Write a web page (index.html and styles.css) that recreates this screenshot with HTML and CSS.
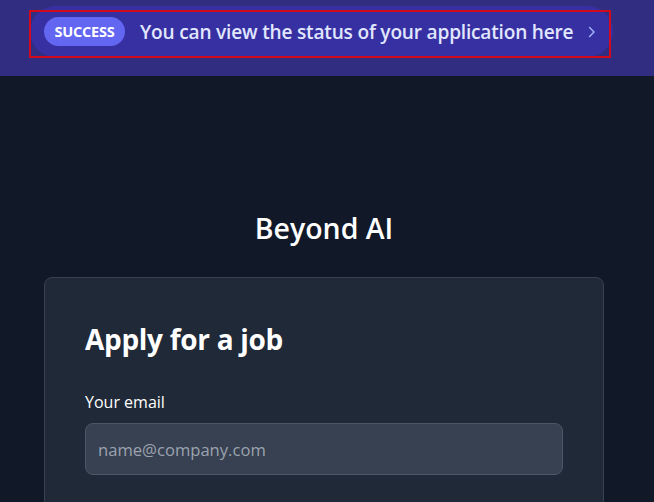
FILE: index.html
```html
<!DOCTYPE html>
<html lang="en">
<head>
<meta charset="utf-8">
<title>Beyond AI</title>
<link rel="stylesheet" href="styles.css">
</head>
<body>
<header class="topbar">
  <a class="notice" href="#">
    <span class="badge">SUCCESS</span>
    <span class="notice-text">You can view the status of your application here</span>
    <svg class="chev" viewBox="0 0 10 14" width="8" height="12" aria-hidden="true"><path d="M2 1.5 L7.5 7 L2 12.5" fill="none" stroke="currentColor" stroke-width="1.8" stroke-linecap="round" stroke-linejoin="round"/></svg>
  </a>
</header>
<main class="main">
  <h1 class="brand">Beyond AI</h1>
  <section class="card">
    <h2 class="card-title">Apply for a job</h2>
    <label class="label" for="email">Your email</label>
    <input class="input" id="email" type="email" placeholder="name@company.com">
  </section>
</main>
</body>
</html>
```
FILE: styles.css
```css
* { box-sizing: border-box; }
html, body { margin: 0; padding: 0; }
body {
  background: #111827;
  font-family: "Open Sans", "Noto Sans", sans-serif;
  color: #fff;
  height: 502px;
  overflow: hidden;
}
.topbar {
  background: #312e81;
  height: 76px;
  padding: 6px 0 0 30px;
}
.notice {
  position: relative;
  display: flex;
  align-items: center;
  width: 583px;
  height: 51px;
  padding: 0 14px;
  background: #3730a3;
  border-radius: 26px;
  text-decoration: none;
  color: #e0e7ff;
}
.notice::after {
  content: "";
  position: absolute;
  left: -1px;
  top: 4px;
  width: 578px;
  height: 44px;
  border: 2px solid #d10a1e;
}
.badge {
  display: inline-flex;
  align-items: center;
  justify-content: center;
  width: 81px;
  height: 29px;
  border-radius: 15px;
  background: #6366f1;
  color: #fff;
  font-size: 14.5px;
  font-weight: 700;
  letter-spacing: -0.2px;
}
.notice-text {
  margin-left: 15px;
  font-size: 19.1px;
  font-weight: 600;
  letter-spacing: -0.2px;
}
.chev {
  margin-left: 15px;
  color: #a5b4fc;
}
.main {
  padding-top: 134px;
  width: 560px;
  margin-left: 44px;
}
.brand {
  margin: 0 0 31px;
  text-align: center;
  font-size: 28.5px;
  font-weight: 600;
  line-height: 36px;
}
.card {
  background: #1f2937;
  border: 1px solid #374151;
  border-radius: 8px;
  padding: 43px 40px 60px;
}
.card-title {
  margin: 0 0 34px;
  font-size: 28px;
  font-weight: 700;
  line-height: 36px;
  letter-spacing: -0.3px;
}
.label {
  display: block;
  font-size: 16px;
  line-height: 22px;
  margin-bottom: 10px;
}
.input {
  display: block;
  width: 478px;
  height: 52px;
  padding: 0 12px;
  background: #374151;
  border: 1px solid #4b5563;
  border-radius: 8px;
  color: #fff;
  font-family: inherit;
  font-size: 16.6px;
}
.input::placeholder { color: #9ca3af; }
```
